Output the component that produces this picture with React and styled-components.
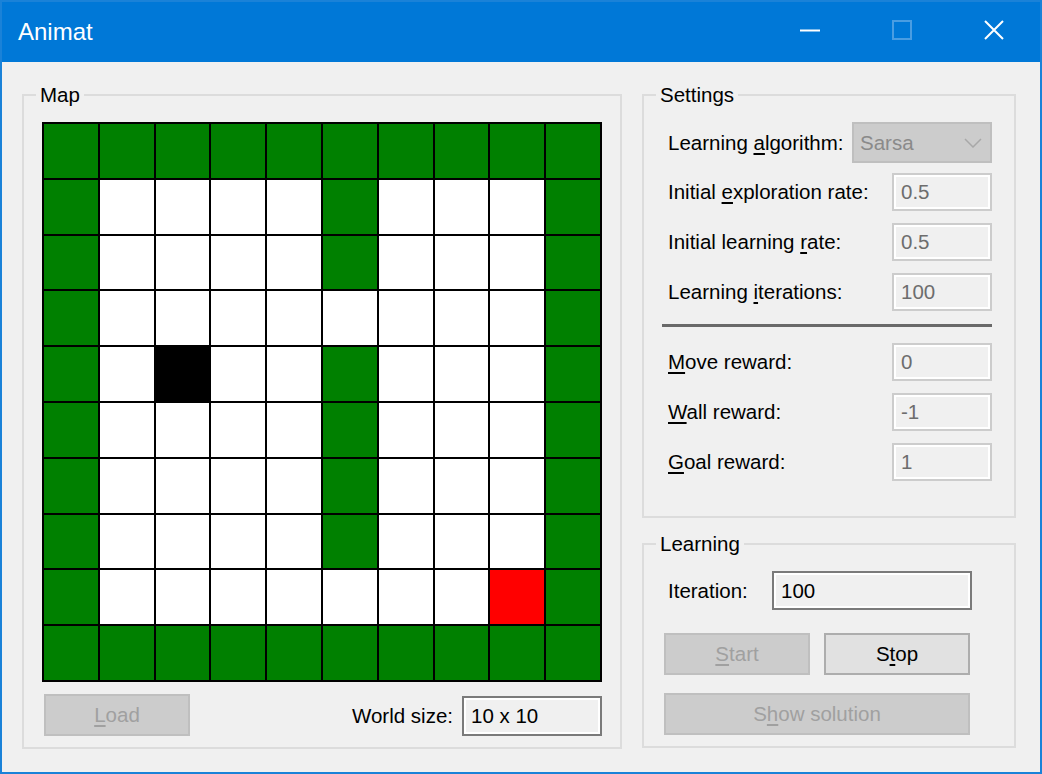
import { createGlobalStyle, styled } from "styled-components";

const GlobalStyle = createGlobalStyle`
    html, body {
        margin:0;
        padding:0;
        background:#f0f0f0;
    }
    body {
        font-family:"Liberation Sans", Arial, sans-serif;
    }
`;

const Window = styled.div`
    width:1042px;
    height:774px;
    box-sizing:border-box;
    border:2px solid #1a82d8;
    border-top:none;
    background:#f0f0f0;
    display:flex;
    flex-direction:column;
    font-size:20.5px;
    color:#000;
`;

const TitleBar = styled.div`
    height:62px;
    flex-shrink:0;
    background:#0078d7;
    border-top:2px solid #1a82d8;
    box-sizing:border-box;
    display:flex;
    align-items:center;
    color:#fff;
`;

const Title = styled.div`
    flex:1;
    padding-left:16px;
    font-size:24px;
`;

const CaptionButton = styled.div`
    width:92px;
    height:100%;
    display:flex;
    justify-content:center;
    align-items:flex-start;
    padding-top:18px;
    box-sizing:border-box;
`;

const Body = styled.div`
    flex:1;
    display:flex;
    align-items:flex-start;
    gap:20px;
    padding:23px 24px 0 20px;
`;

const GroupBox = styled.fieldset`
    margin:0;
    min-width:0;
    box-sizing:border-box;
    border:2px solid #dcdcdc;
    width:${p => p.$width}px;
    padding:${p => p.$padding};
    display:flex;
    flex-direction:column;
`;

const Caption = styled.legend`
    margin-left:${p => p.$offset}px;
    padding:0 4px;
    line-height:20px;
    font-size:20.5px;
`;

const Grid = styled.div`
    width:560px;
    height:560px;
    box-sizing:border-box;
    background:#000;
    padding:2px;
    display:grid;
    grid-template-columns:repeat(10, 1fr);
    grid-template-rows:repeat(10, 1fr);
    gap:2px;
`;

const cellColors = { G: "#008000", W: "#ffffff", B: "#000000", R: "#ff0000" };

const Cell = styled.div`
    background:${p => cellColors[p.$kind]};
`;

const MapFooter = styled.div`
    margin-top:12px;
    display:flex;
    justify-content:space-between;
    align-items:flex-end;
    padding-left:2px;
`;

const SizeGroup = styled.div`
    display:flex;
    align-items:center;
    gap:9px;
`;

const Button = styled.div`
    box-sizing:border-box;
    height:42px;
    width:${p => p.$width}px;
    display:flex;
    align-items:center;
    justify-content:center;
    background:${p => (p.$disabled ? "#cccccc" : "#e1e1e1")};
    border:2px solid ${p => (p.$disabled ? "#bfbfbf" : "#adadad")};
    color:${p => (p.$disabled ? "#a0a0a0" : "#000")};
`;

const TextBox = styled.div`
    box-sizing:border-box;
    width:${p => p.$width}px;
    height:${p => p.$height}px;
    border:2px solid ${p => (p.$disabled ? "#cccccc" : "#7a7a7a")};
    box-shadow:inset 0 0 0 2px #fff;
    background:#f0f0f0;
    color:${p => (p.$disabled ? "#6d6d6d" : "#000")};
    display:flex;
    align-items:center;
    padding-left:7px;
`;

const Combo = styled.div`
    box-sizing:border-box;
    width:140px;
    height:41px;
    background:#cccccc;
    border:2px solid #bfbfbf;
    color:#8a8a8a;
    display:flex;
    align-items:center;
    justify-content:space-between;
    padding:0 8px 0 6px;
`;

const RightColumn = styled.div`
    display:flex;
    flex-direction:column;
    gap:16px;
`;

const FieldList = styled.div`
    display:flex;
    flex-direction:column;
    gap:12px;
`;

const FieldRow = styled.div`
    display:flex;
    justify-content:space-between;
    align-items:center;
    padding-left:6px;
`;

const ComboRow = styled(FieldRow)`
    margin-bottom:-2px;
`;

const Separator = styled.div`
    height:3px;
    background:#696969;
    margin:13px 0 16px;
`;

const IterationRow = styled.div`
    display:flex;
    align-items:center;
    padding-left:4px;
`;

const IterationLabel = styled.span`
    width:104px;
`;

const ButtonRow = styled.div`
    display:flex;
    gap:14px;
    margin-top:${p => p.$top}px;
`;

const Key = styled.span`
    text-decoration:underline;
    text-underline-offset:3px;
`;

const MAP = [
    "GGGGGGGGGG",
    "GWWWWGWWWG",
    "GWWWWGWWWG",
    "GWWWWWWWWG",
    "GWBWWGWWWG",
    "GWWWWGWWWG",
    "GWWWWGWWWG",
    "GWWWWGWWWG",
    "GWWWWWWWRG",
    "GGGGGGGGGG",
];

function Field({ label, value }) {
    return (
        <FieldRow>
            <span>{label}</span>
            <TextBox $width={100} $height={38} $disabled>{value}</TextBox>
        </FieldRow>
    );
}

export default function App() {
    return (
        <>
            <GlobalStyle />
            <Window>
                <TitleBar>
                    <Title>Animat</Title>
                    <CaptionButton>
                        <svg width="20" height="20" viewBox="0 0 20 20">
                            <line x1="0" y1="10.5" x2="20" y2="10.5" stroke="#fff" strokeWidth="2" />
                        </svg>
                    </CaptionButton>
                    <CaptionButton>
                        <svg width="20" height="20" viewBox="0 0 20 20">
                            <rect x="1" y="1" width="18" height="18" fill="none" stroke="#4a9de2" strokeWidth="2" />
                        </svg>
                    </CaptionButton>
                    <CaptionButton>
                        <svg width="20" height="20" viewBox="0 0 20 20">
                            <path d="M1 1 L19 19 M19 1 L1 19" stroke="#fff" strokeWidth="2" />
                        </svg>
                    </CaptionButton>
                </TitleBar>
                <Body>
                    <GroupBox $width={600} $padding="17px 18px 11px 18px">
                        <Caption $offset={-6}>Map</Caption>
                        <Grid>
                            {MAP.map((row, r) =>
                                row.split("").map((k, c) => <Cell key={r + "-" + c} $kind={k} />)
                            )}
                        </Grid>
                        <MapFooter>
                            <Button $width={146} $disabled><Key>L</Key>oad</Button>
                            <SizeGroup>
                                <span>World size:</span>
                                <TextBox $width={140} $height={40}>10 x 10</TextBox>
                            </SizeGroup>
                        </MapFooter>
                    </GroupBox>
                    <RightColumn>
                        <GroupBox $width={374} $padding="17px 22px 35px 18px">
                            <Caption $offset={-6}>Settings</Caption>
                            <FieldList>
                                <ComboRow>
                                    <span>Learning <Key>a</Key>lgorithm:</span>
                                    <Combo>
                                        <span>Sarsa</span>
                                        <svg width="18" height="10" viewBox="0 0 18 10">
                                            <path d="M1 1 L9 9 L17 1" fill="none" stroke="#a8a8a8" strokeWidth="1.5" />
                                        </svg>
                                    </Combo>
                                </ComboRow>
                                <Field label={<>Initial <Key>e</Key>xploration rate:</>} value="0.5" />
                                <Field label={<>Initial learning <Key>r</Key>ate:</>} value="0.5" />
                                <Field label={<>Learning <Key>i</Key>terations:</>} value="100" />
                            </FieldList>
                            <Separator />
                            <FieldList>
                                <Field label={<><Key>M</Key>ove reward:</>} value="0" />
                                <Field label={<><Key>W</Key>all reward:</>} value="-1" />
                                <Field label={<><Key>G</Key>oal reward:</>} value="1" />
                            </FieldList>
                        </GroupBox>
                        <GroupBox $width={374} $padding="17px 22px 11px 20px">
                            <Caption $offset={-8}>Learning</Caption>
                            <IterationRow>
                                <IterationLabel>Iteration:</IterationLabel>
                                <TextBox $width={200} $height={39}>100</TextBox>
                            </IterationRow>
                            <ButtonRow $top={23}>
                                <Button $width={146} $disabled><Key>S</Key>tart</Button>
                                <Button $width={146}>S<Key>t</Key>op</Button>
                            </ButtonRow>
                            <ButtonRow $top={18}>
                                <Button $width={306} $disabled>S<Key>h</Key>ow solution</Button>
                            </ButtonRow>
                        </GroupBox>
                    </RightColumn>
                </Body>
            </Window>
        </>
    );
}
